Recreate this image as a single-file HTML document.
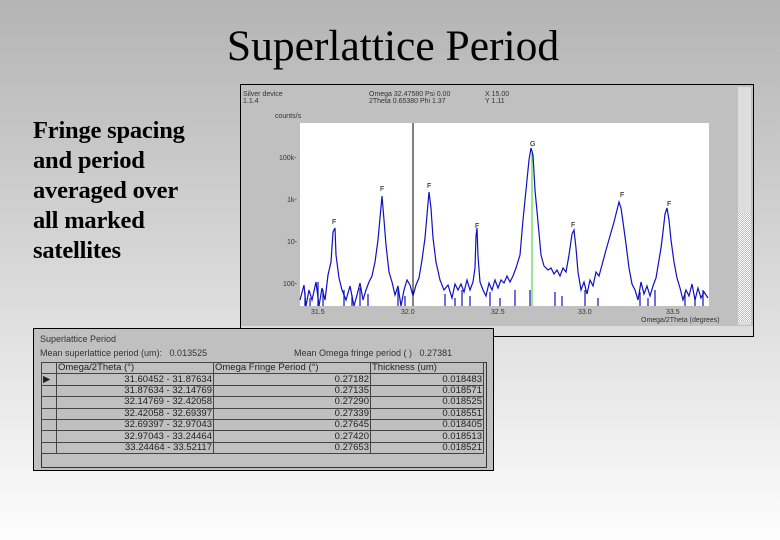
<!DOCTYPE html>
<html><head><style>
body{margin:0;width:780px;height:540px;overflow:hidden;background:linear-gradient(#b4b4b4 0%,#d8d8d8 50%,#fdfdfd 100%);position:relative;font-family:"Liberation Sans",sans-serif}
.t{position:absolute;left:0;width:786px;text-align:center;top:21px;font:43.5px "Liberation Serif",serif;color:#000}
.l{position:absolute;left:33px;top:116px;font:bold 24.5px/30px "Liberation Serif",serif;color:#000;letter-spacing:-0.2px}
.win{position:absolute;left:240px;top:84px;width:514px;height:253px;background:#c0c0c0;border:1px solid #000;box-sizing:border-box}
.s{position:absolute;font-size:7px;color:#333;white-space:nowrap}
.tw{position:absolute;left:33px;top:328px;width:461px;height:143px;background:#c0c0c0;border:1px solid #000;box-sizing:border-box}
.grid{position:absolute;left:7px;top:33px;width:446px;height:106px;border:1px solid #333;box-sizing:border-box}
table{position:absolute;left:-1px;top:-1px;border-collapse:collapse;font-size:9.5px;color:#222}
td{border:1px solid #444;height:10.4px;padding:0 1px;line-height:10px;white-space:nowrap}
</style></head><body>
<div class="t">Superlattice Period</div>
<div class="l">Fringe spacing<br>and period<br>averaged over<br>all marked<br>satellites</div>
<div class="win">
<div class="s" style="left:2px;top:6px">Silver device<br>1.1.4</div>
<div class="s" style="left:128px;top:6px">Omega 32.47580 Psi 0.00<br>2Theta 0.65380 Phi 1.37</div>
<div class="s" style="left:244px;top:6px">X 15.00<br>Y 1.11</div>
<div class="s" style="left:34px;top:28px">counts/s</div>
<div class="s" style="left:38px;top:70px">100k-</div>
<div class="s" style="left:46px;top:112px">1k-</div>
<div class="s" style="left:46px;top:154px">10-</div>
<div class="s" style="left:42px;top:196px">100-</div>
<div class="s" style="left:70px;top:224px">31.5</div>
<div class="s" style="left:160px;top:224px">32.0</div>
<div class="s" style="left:250px;top:224px">32.5</div>
<div class="s" style="left:337px;top:224px">33.0</div>
<div class="s" style="left:425px;top:224px">33.5</div>
<div class="s" style="left:400px;top:232px">Omega/2Theta (degrees)</div>
<div style="position:absolute;left:497px;top:2px;width:13px;height:238px;background:#ddd"></div>
<div style="position:absolute;left:497px;top:128px;width:13px;height:108px;background:repeating-conic-gradient(#fff 0 25%,#bbb 0 50%) 0 0/2px 2px"></div>
<div style="position:absolute;left:0;top:241px;width:512px;height:10px;background:#ddd"></div>
</div>
<svg style="position:absolute;left:0;top:0" width="780" height="540">
<rect x="300" y="123" width="409" height="183" fill="#fff"/>
<line x1="413" y1="123" x2="413" y2="306" stroke="#000"/>
<line x1="532" y1="150" x2="532" y2="306" stroke="#3c3"/>
<g stroke="#1010c0" fill="none" stroke-width="1.2">
<path d="M300,300 L304,285 306,306 309,290 312,300 316,282 319,306 322,288 325,300 328,275 331,262 333,232 335,228 336,255 339,278 342,290 346,300 350,286 354,306 357,295 360,283 363,300 366,290 369,282 372,276 375,262 378,240 380,218 382,196 384,220 386,245 389,272 392,282 395,295 398,286 401,306 404,290 407,280 410,285 413,296 416,285 419,278 422,260 425,238 427,215 429,192 431,208 433,238 436,262 440,280 444,290 448,285 452,298 455,284 458,290 461,284 464,292 467,280 470,290 473,282 475,268 476,236 477,228 478,256 480,282 483,290 486,296 489,283 492,290 495,280 498,288 501,280 504,283 507,276 510,282 513,276 516,268 520,255 523,220 525,200 527,180 529,160 531,148 533,155 535,190 538,222 541,255 544,266 548,270 551,268 554,274 557,270 560,276 563,268 566,272 569,255 572,234 574,230 576,248 578,272 581,290 584,282 587,294 590,280 593,286 596,272 599,276 602,265 606,250 610,236 614,222 617,210 619,202 621,208 623,222 626,244 629,268 632,284 635,290 638,300 641,282 644,294 647,286 650,296 653,286 656,278 658,266 661,248 663,232 665,214 667,208 669,220 671,240 674,262 677,278 680,288 683,300 686,290 689,296 692,284 695,300 698,288 701,298 704,292 708,298"/>
<path d="M305,306V292 M310,306V298 M318,306V282 M323,306V290 M344,306V290 M352,306V295 M360,306V288 M368,306V294 M398,306V290 M405,306V296 M445,306V294 M455,306V298 M462,306V290 M470,306V296 M490,306V292 M500,306V298 M515,306V290 M530,306V290 M555,306V292 M562,306V296 M585,306V290 M598,306V298 M640,306V292 M648,306V298 M655,306V290 M685,306V292 M695,306V298 M703,306V290"/>
</g>
<g font-size="7" font-family="Liberation Sans" fill="#000">
<text x="332" y="224">F</text><text x="380" y="191">F</text><text x="427" y="188">F</text><text x="475" y="228">F</text><text x="530" y="146">G</text><text x="571" y="227">F</text><text x="620" y="197">F</text><text x="667" y="206">F</text>
</g>
</svg>
<div class="tw">
<div class="s" style="left:6px;top:5px;font-size:9px">Superlattice Period</div>
<div class="s" style="left:6px;top:19px;font-size:9px">Mean superlattice period (um):&nbsp;&nbsp; 0.013525</div>
<div class="s" style="left:260px;top:19px;font-size:9px">Mean Omega fringe period ( )&nbsp;&nbsp; 0.27381</div>
<div class="grid">
<table>
<tr><td style="width:12px"></td><td style="width:154px">Omega/2Theta (°)</td><td style="width:154px">Omega Fringe Period (°)</td><td style="width:110px">Thickness (um)</td></tr>
<tr><td>▶</td><td align="right">31.60452 - 31.87634</td><td align="right">0.27182</td><td align="right">0.018483</td></tr>
<tr><td></td><td align="right">31.87634 - 32.14769</td><td align="right">0.27135</td><td align="right">0.018571</td></tr>
<tr><td></td><td align="right">32.14769 - 32.42058</td><td align="right">0.27290</td><td align="right">0.018525</td></tr>
<tr><td></td><td align="right">32.42058 - 32.69397</td><td align="right">0.27339</td><td align="right">0.018551</td></tr>
<tr><td></td><td align="right">32.69397 - 32.97043</td><td align="right">0.27645</td><td align="right">0.018405</td></tr>
<tr><td></td><td align="right">32.97043 - 33.24464</td><td align="right">0.27420</td><td align="right">0.018513</td></tr>
<tr><td></td><td align="right">33.24464 - 33.52117</td><td align="right">0.27653</td><td align="right">0.018521</td></tr>
</table>
</div>
</div>
</body></html>
